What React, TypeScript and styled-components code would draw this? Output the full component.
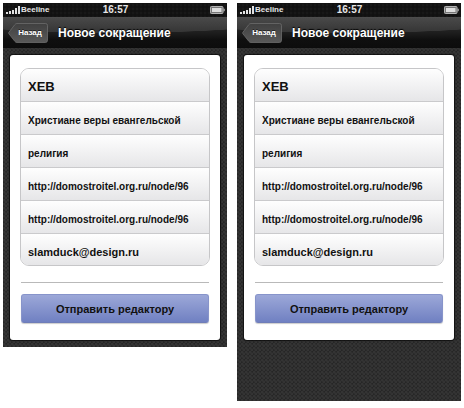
import React, { useId } from "react";
import styled, { createGlobalStyle } from "styled-components";

const GlobalStyle = createGlobalStyle`
  *, *::before, *::after { box-sizing: border-box; }
  body {
    margin: 0;
    background: #fff;
    font-family: "Liberation Sans", Arial, Helvetica, sans-serif;
    font-weight: 700;
    color: #111;
  }
`;

const Page = styled.main`
  display: grid;
  grid-template-columns: 1fr 1fr;
  align-items: start;
  gap: 10px;
  padding: 3px;
`;

const Phone = styled.section<{ $space: number }>`
  min-width: 0;
  padding-bottom: ${(p) => p.$space}px;
  background-color: #262626;
  background-image:
    radial-gradient(circle at 1px 1px, #3c3c3c 0, transparent 2px),
    radial-gradient(circle at 3px 3px, #3c3c3c 0, transparent 2px);
  background-size: 4px 4px;
`;

const StatusBar = styled.div`
  display: grid;
  grid-template-columns: 1fr auto 1fr;
  align-items: center;
  height: 14px;
  padding: 0 2px 1px 3px;
  background-color: #111;
  background-image: radial-gradient(circle at 2px 2px, #1c1c1c 0, transparent 2px);
  background-size: 4px 4px;
  color: #e6e6e6;
  font-size: 8px;
  line-height: 12px;

  svg { display: block; }
`;

const Carrier = styled.div`
  display: flex;
  align-items: center;
  gap: 1px;
`;

const Clock = styled.time`
  font-size: 10px;
`;

const BatterySlot = styled.div`
  display: flex;
  justify-content: flex-end;
`;

const Header = styled.header`
  display: flex;
  align-items: center;
  gap: 10px;
  height: 31px;
  padding: 0 5px;
  border-top: 1px solid #4c4c4c;
  border-bottom: 1px solid #0c0c0c;
  background:
    radial-gradient(ellipse 80% 52% at 50% 0, rgba(255, 255, 255, 0.1) 97%, transparent 100%),
    linear-gradient(#343434 0, #1d1d1d 52%, #0f0f0f 75%, #0d0d0d 100%);
`;

const BackButton = styled.button`
  position: relative;
  width: 40px;
  height: 20px;
  flex: none;
  border: 0;
  padding: 0 0 1px 4px;
  background: none;
  color: #fff;
  font: inherit;
  font-size: 8px;
  line-height: 20px;
  text-shadow: 0 -1px 0 #222;
  cursor: pointer;

  svg { position: absolute; inset: 0; }
  span { position: relative; }
`;

const Title = styled.h1`
  margin: 0;
  color: #fff;
  font-size: 12px;
  line-height: 16px;
  white-space: nowrap;
  text-shadow: 0 -1px 1px #000;
`;

const Card = styled.form`
  margin: 7px 7px 0;
  padding: 13px 10px 17px;
  border-radius: 3px;
  background: #fff;
  box-shadow: 0 0 1px 1px rgba(0, 0, 0, 0.65);
`;

const FieldList = styled.div`
  border: 1px solid #c6c6c8;
  border-radius: 9px;
  overflow: hidden;
`;

const fieldSizes = { large: 13, medium: 11, regular: 10 };

const Field = styled.input<{ $size: keyof typeof fieldSizes }>`
  display: block;
  width: 100%;
  height: 33px;
  margin: 0;
  padding: ${(p) => (p.$size === "large" ? 2 : 4)}px 7px 0;
  border: 0;
  border-bottom: 1px solid #cacacc;
  border-radius: 0;
  outline: 0;
  background: linear-gradient(#fefefe, #e6e6e8);
  color: #111;
  font: inherit;
  font-size: ${(p) => fieldSizes[p.$size]}px;

  &:last-child {
    height: 31px;
    border-bottom: 0;
  }
`;

const Divider = styled.hr`
  height: 1px;
  margin: 16px 1px 11px;
  border: 0;
  background: #b9b9b9;
`;

const SubmitButton = styled.button`
  display: block;
  width: calc(100% - 2px);
  height: 29px;
  margin: 0 1px;
  padding: 0;
  border: 1px solid #8794ca;
  border-bottom-color: #6f7db8;
  border-radius: 3px;
  background: linear-gradient(#9ca8d8, #7080c2);
  box-shadow: 0 1px 1px #ccc;
  color: #111;
  font: inherit;
  font-size: 11px;
  cursor: pointer;
`;

function SignalIcon() {
  return (
    <svg width="14" height="8" viewBox="0 0 14 8" fill="#e2e2e2" aria-hidden="true">
      <rect x="0" y="6" width="2" height="2" />
      <rect x="3" y="5" width="2" height="3" />
      <rect x="6" y="4" width="2" height="4" />
      <rect x="9" y="2" width="2" height="6" />
      <rect x="12" y="0" width="2" height="8" />
    </svg>
  );
}

function BatteryIcon() {
  return (
    <svg width="15" height="8" viewBox="0 0 15 8" aria-hidden="true">
      <rect x="0.5" y="0.5" width="12.5" height="7" rx="0.8" fill="#777" stroke="#b4b4b4" />
      <rect x="2" y="2" width="9.5" height="4" fill="#dedede" />
      <path d="M13.5 2.2 L14.7 3 V5 L13.5 5.8 Z" fill="#bdbdbd" />
    </svg>
  );
}

function BackShape() {
  const id = useId();
  return (
    <svg width="40" height="20" viewBox="0 0 40 20" aria-hidden="true">
      <defs>
        <linearGradient id={id} x1="0" y1="0" x2="0" y2="1">
          <stop offset="0" stopColor="#404040" />
          <stop offset="1" stopColor="#595959" />
        </linearGradient>
      </defs>
      <path
        d="M9 0.5 H37.5 Q39.5 0.5 39.5 2.5 V17 Q39.5 19.5 37.5 19.5 H9 Q7.6 19.5 6.8 18.3 L0.8 10.6 Q0.3 10 0.8 9.4 L6.8 1.7 Q7.6 0.5 9 0.5 Z"
        fill={`url(#${id})`}
        stroke="#6c6c6c"
        strokeWidth="0.8"
      />
    </svg>
  );
}

const fields: { label: string; value: string; size: keyof typeof fieldSizes }[] = [
  { label: "Сокращение", value: "ХЕВ", size: "large" },
  { label: "Расшифровка", value: "Христиане веры евангельской", size: "regular" },
  { label: "Категория", value: "религия", size: "regular" },
  { label: "Источник", value: "http://domostroitel.org.ru/node/96", size: "regular" },
  { label: "Ссылка", value: "http://domostroitel.org.ru/node/96", size: "regular" },
  { label: "Почта", value: "slamduck@design.ru", size: "medium" },
];

function PhoneScreen({ space }: { space: number }) {
  return (
    <Phone $space={space}>
      <StatusBar>
        <Carrier>
          <SignalIcon />
          Beeline
        </Carrier>
        <Clock>16:57</Clock>
        <BatterySlot>
          <BatteryIcon />
        </BatterySlot>
      </StatusBar>
      <Header>
        <BackButton type="button">
          <BackShape />
          <span>Назад</span>
        </BackButton>
        <Title>Новое сокращение</Title>
      </Header>
      <Card onSubmit={(e) => e.preventDefault()}>
        <FieldList>
          {fields.map((f) => (
            <Field key={f.label} aria-label={f.label} defaultValue={f.value} $size={f.size} />
          ))}
        </FieldList>
        <Divider />
        <SubmitButton type="submit">Отправить редактору</SubmitButton>
      </Card>
    </Phone>
  );
}

export default function App() {
  return (
    <>
      <GlobalStyle />
      <Page>
        <PhoneScreen space={7} />
        <PhoneScreen space={61} />
      </Page>
    </>
  );
}
